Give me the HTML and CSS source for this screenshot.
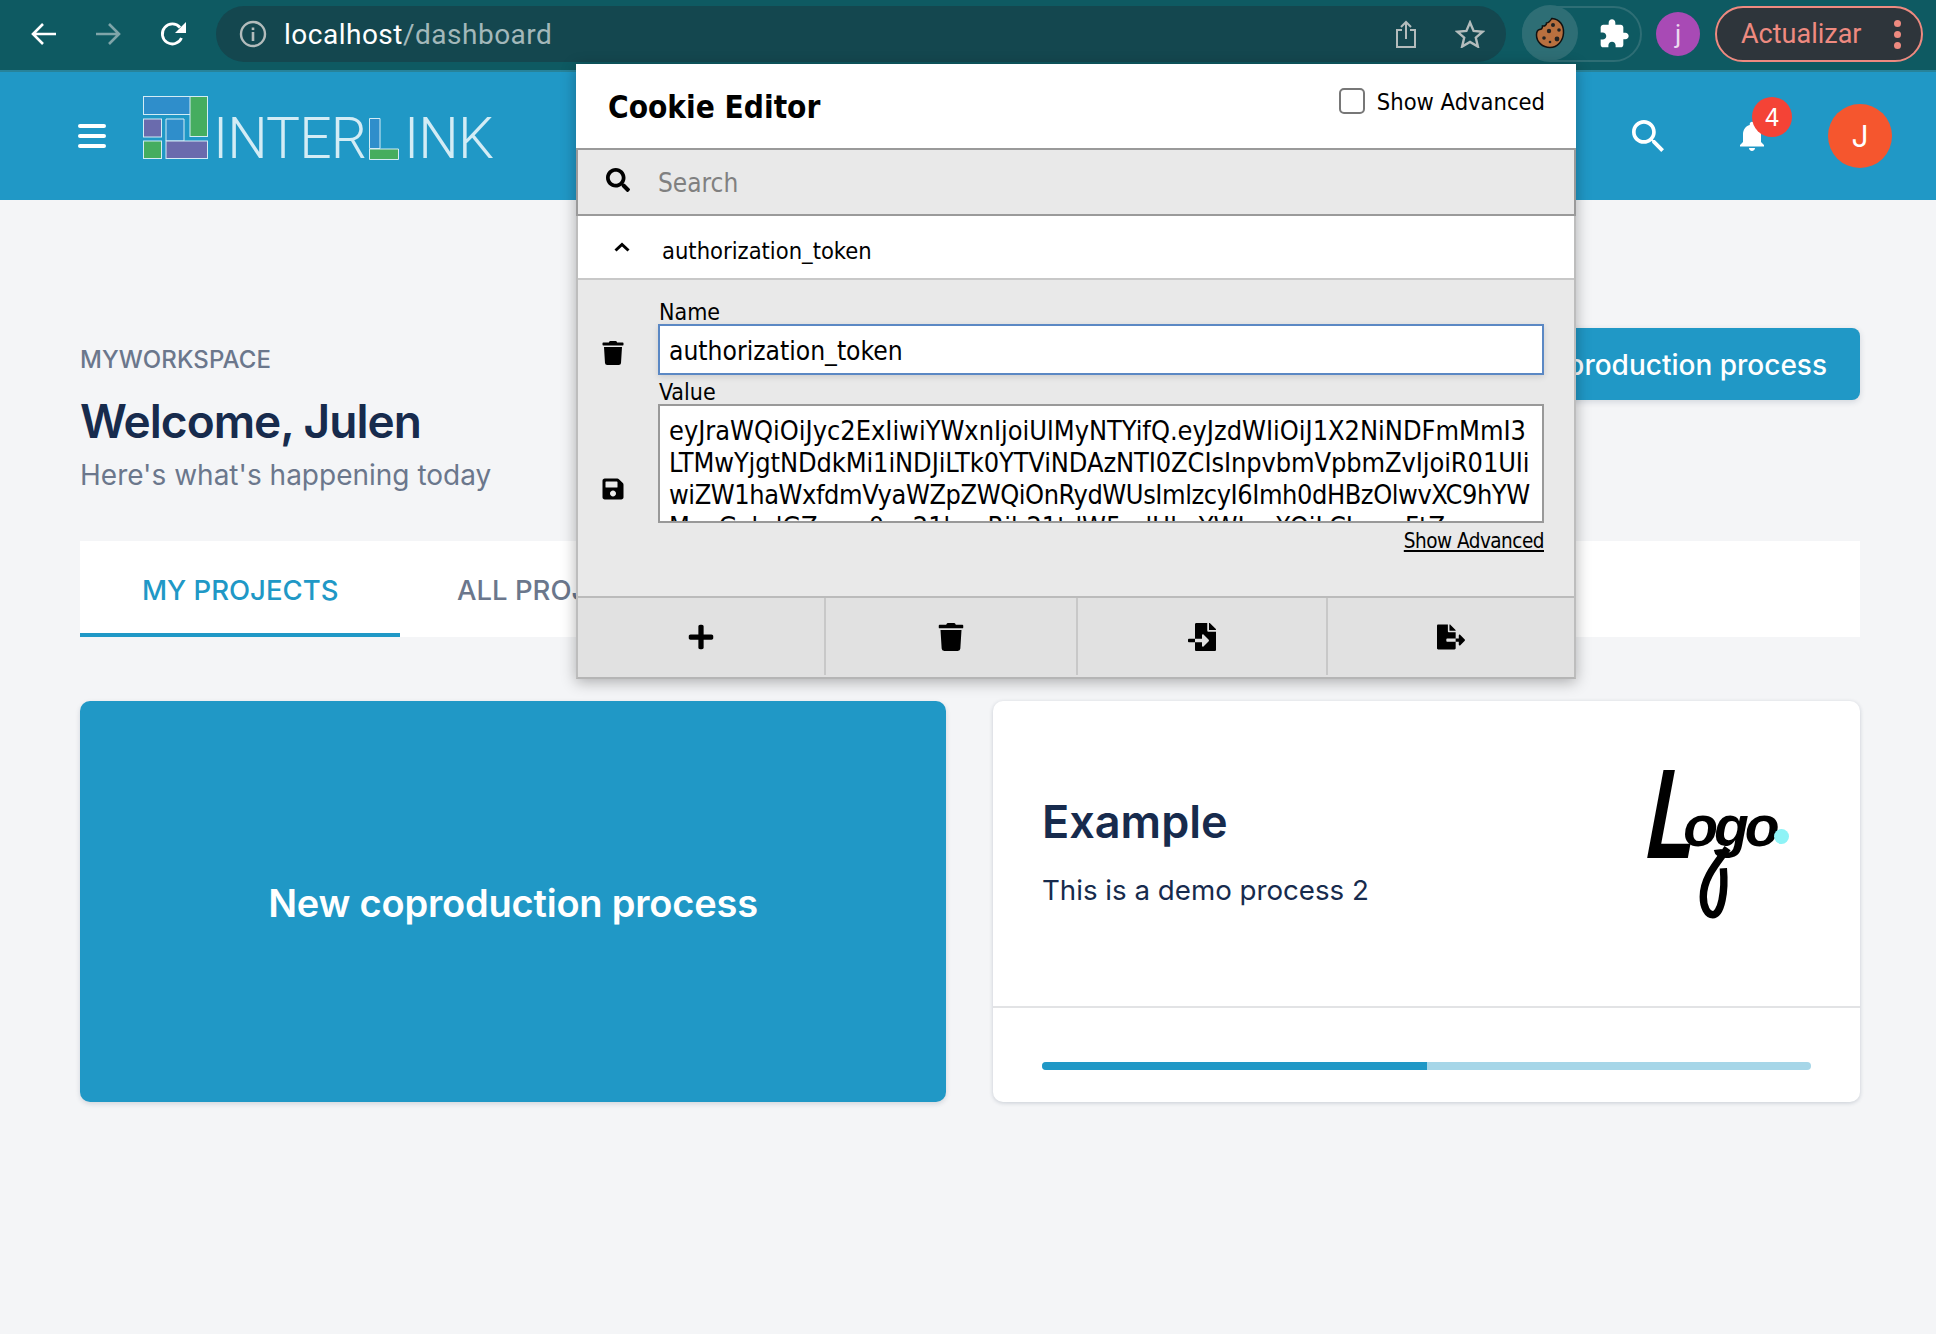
FILE: index.html
```html
<!DOCTYPE html>
<html lang="en">
<head>
    <meta charset="UTF-8">
    <title>Dashboard</title>
    <link rel="stylesheet" href="styles.css">
</head>
<body>
    <!-- Browser chrome -->
    <div class="browser-bar">
        <svg class="nav-icon" viewBox="0 0 26 24"><path d="M25 12H3M12 2L2 12l10 10" fill="none" stroke="#fff" stroke-width="2.6"/></svg>
        <svg class="nav-icon nav-forward" viewBox="0 0 26 24"><path d="M1 12h22M14 2l10 10-10 10" fill="none" stroke="#7fa5a9" stroke-width="2.6"/></svg>
        <svg class="nav-reload" viewBox="0 0 28 26"><path d="M22.5 17a10 10 0 1 1-1.5-10.5" fill="none" stroke="#fff" stroke-width="2.8"/><path d="M27 1v11H16z" fill="#fff"/></svg>
        <div class="url-pill">
            <svg class="info-icon" viewBox="0 0 28 28"><circle cx="14" cy="14" r="12" fill="none" stroke="#b3bcbc" stroke-width="2.4"/><rect x="12.7" y="12" width="2.6" height="9" fill="#b3bcbc"/><rect x="12.7" y="7.5" width="2.6" height="2.6" fill="#b3bcbc"/></svg>
            <span class="url-text">localhost<span class="url-path">/dashboard</span></span>
            <svg class="share-icon" viewBox="0 0 22 28"><path d="M7 10H2v17h18V10h-5M11 19V2M6 7l5-5 5 5" fill="none" stroke="#b3bcbc" stroke-width="2"/></svg>
            <svg class="star-icon" viewBox="0 0 30 28"><path d="M15 2.5l3.6 8.4 9.1.8-6.9 6 2.1 8.9-7.900-4.700-7.900 4.700 2.100-8.900-6.900-6 9.100-.8z" fill="none" stroke="#b3bcbc" stroke-width="2.400"/></svg>
        </div>
        <div class="ext-pill">
            <div class="ext-cookie">
                <svg viewBox="0 0 30 32" width="30" height="32"><path d="M17 1.500c8 .5 12 7.500 11.500 14.500-.5 8-6 14.500-13.500 14.500S1.500 25 1.500 18c0-3 1-5 3-5.500 2.500 0 3-2 3-3.500 2.500.5 4-1 4-3 2-.2 4-2.200 5.500-5z" fill="#b9703f" stroke="#111" stroke-width="1.500"/><circle cx="18" cy="8" r="2" fill="#222"/><circle cx="24" cy="13" r="1.800" fill="#222"/><circle cx="14" cy="14" r="2.200" fill="#222"/><circle cx="22" cy="22" r="2.400" fill="#222"/><circle cx="9" cy="21" r="1.800" fill="#222"/><circle cx="15" cy="25" r="1.300" fill="#222"/></svg>
            </div>
            <svg class="puzzle-icon" viewBox="0 0 24 24"><path fill="#fff" d="M20.500 11H19V7c0-1.100-.9-2-2-2h-4V3.500C13 2.120 11.880 1 10.500 1S8 2.120 8 3.500V5H4c-1.100 0-1.990.9-1.990 2v3.800H3.500c1.490 0 2.700 1.210 2.700 2.700s-1.210 2.700-2.700 2.700H2V20c0 1.100.9 2 2 2h3.800v-1.500c0-1.490 1.210-2.700 2.700-2.700 1.490 0 2.700 1.210 2.700 2.700V22H17c1.100 0 2-.9 2-2v-4h1.500c1.380 0 2.500-1.120 2.500-2.500S21.880 11 20.500 11z"/></svg>
        </div>
        <div class="profile-dot">j</div>
        <div class="update-pill">
            <span>Actualizar</span>
            <div class="kebab"><i></i><i></i><i></i></div>
        </div>
    </div>

    <!-- App bar -->
    <header class="app-bar">
        <div class="hamburger"><i></i><i></i><i></i></div>
        <svg class="logo-mark" viewBox="0 0 65 63">
            <g stroke="#d3ecf5" stroke-width="1">
                <rect x="0.500" y="0.500" width="47" height="18" fill="#2f8ecb"/>
                <rect x="47" y="0.500" width="17.500" height="40" fill="#45ad5f"/>
                <rect x="0.500" y="23" width="18" height="18" fill="#6a6bad"/>
                <path d="M23 23h18v22H23z" fill="#2f8ecb"/>
                <rect x="0.500" y="45" width="18" height="17.500" fill="#45ad5f"/>
                <rect x="23" y="45" width="41.500" height="17.500" fill="#6a6bad"/>
            </g>
        </svg>
        <div class="logo-word">INTER<svg class="logo-l" viewBox="0 0 30 42"><path d="M.5.5h10.500v30H.5z" fill="#2f8ecb" stroke="#d3ecf5"/><path d="M.5 31h29v10.500H.5z" fill="#45ad5f" stroke="#d3ecf5"/></svg>INK</div>
        <div class="app-actions">
            <svg class="app-search" viewBox="3 3 17.500 17.500"><path fill="#fff" d="M15.500 14h-.79l-.28-.27C15.410 12.590 16 11.110 16 9.500 16 5.910 13.090 3 9.500 3S3 5.910 3 9.500 5.910 16 9.500 16c1.610 0 3.090-.59 4.230-1.570l.27.28v.79l5 4.990L20.490 19l-4.990-5zm-6 0C7.010 14 5 11.990 5 9.500S7.010 5 9.500 5 14 7.010 14 9.500 11.990 14 9.500 14z"/></svg>
            <div class="bell">
                <svg viewBox="0 0 24 24" width="36" height="36"><path fill="#fff" d="M12 22c1.100 0 2-.9 2-2h-4c0 1.100.89 2 2 2zm6-6v-5c0-3.070-1.640-5.640-4.500-6.320V4c0-.83-.67-1.500-1.500-1.500s-1.500.67-1.500 1.500v.68C7.630 5.360 6 7.920 6 11v5l-2 2v1h16v-1l-2-2z"/></svg>
                <span class="badge">4</span>
            </div>
            <div class="avatar">J</div>
        </div>
    </header>

    <main class="content">
        <div class="page-head">
            <div class="page-title">
                <div class="overline">MYWORKSPACE</div>
                <h1>Welcome, Julen</h1>
                <div class="subtitle">Here's what's happening today</div>
            </div>
            <button class="new-btn">New coproduction process</button>
        </div>

        <div class="tabs">
            <div class="tab tab-active">MY PROJECTS</div>
            <div class="tab">ALL PROJECTS</div>
        </div>

        <div class="cards">
            <div class="card-new">New coproduction process</div>
            <div class="card">
                <div class="card-top">
                    <div>
                        <h2>Example</h2>
                        <p>This is a demo process 2</p>
                    </div>
                    <div class="card-logo">
                        <span class="logo-big">L</span><span class="logo-rest">ogo</span>
                        <i class="logo-dot"></i>
                        <svg class="logo-tail" viewBox="0 0 40 72"><path d="M30 4C20 18 7 32 7 50c0 10 4 17 9 17 8 0 12-22 10-44" fill="none" stroke="#000" stroke-width="7"/></svg>
                    </div>
                </div>
                <div class="card-bottom">
                    <div class="progress"><div class="progress-fill"></div></div>
                </div>
            </div>
        </div>
    </main>

    <!-- Extension popup -->
    <div class="popup">
        <div class="popup-head">
            <div class="popup-title">Cookie Editor</div>
            <label class="popup-check"><span class="checkbox"></span>Show Advanced</label>
        </div>
        <div class="search-row">
            <svg class="ico search-ico" viewBox="0 0 512 512"><path d="M505 442.700L405.300 343c-4.500-4.500-10.600-7-17-7H372c27.600-35.300 44-79.700 44-128C416 93.100 322.900 0 208 0S0 93.100 0 208s93.100 208 208 208c48.300 0 92.700-16.400 128-44v16.300c0 6.400 2.500 12.500 7 17l99.700 99.700c9.400 9.400 24.600 9.400 33.900 0l28.300-28.300c9.400-9.400 9.400-24.600.1-34zM208 336c-70.700 0-128-57.200-128-128 0-70.700 57.200-128 128-128 70.700 0 128 57.200 128 128 0 70.700-57.200 128-128 128z"/></svg>
            <span>Search</span>
        </div>
        <div class="cookie-row">
            <svg class="chevron" viewBox="0 0 16 10"><path d="M1.500 8.500L8 2.500l6.500 6" fill="none" stroke="#000" stroke-width="3"/></svg>
            <span>authorization_token</span>
        </div>
        <div class="cookie-body">
            <div class="side-icons">
                <svg class="ico side-trash" viewBox="0 0 448 512"><path d="M432 32H312l-9.400-18.700A24 24 0 0 0 281.100 0H166.800a23.720 23.720 0 0 0-21.400 13.300L136 32H16A16 16 0 0 0 0 48v32a16 16 0 0 0 16 16h416a16 16 0 0 0 16-16V48a16 16 0 0 0-16-16zM53.200 467a48 48 0 0 0 47.900 45h245.800a48 48 0 0 0 47.900-45L416 128H32z"/></svg>
                <svg class="ico" viewBox="0 0 448 512"><path d="M433.941 129.941l-83.882-83.882A48 48 0 0 0 316.118 32H48C21.490 32 0 53.490 0 80v352c0 26.510 21.490 48 48 48h352c26.510 0 48-21.490 48-48V163.882a48 48 0 0 0-14.059-33.941zM224 416c-35.346 0-64-28.654-64-64 0-35.346 28.654-64 64-64s64 28.654 64 64c0 35.346-28.654 64-64 64zm96-304.520V212c0 6.627-5.373 12-12 12H76c-6.627 0-12-5.373-12-12V108c0-6.627 5.373-12 12-12h228.520c3.183 0 6.235 1.264 8.485 3.515l3.480 3.480A11.996 11.996 0 0 1 320 111.480z"/></svg>
            </div>
            <div class="fields">
                <div class="field-label">Name</div>
                <div class="name-input">authorization_token</div>
                <div class="field-label value-label">Value</div>
                <div class="value-box">
                    <div>eyJraWQiOiJyc2ExIiwiYWxnIjoiUlMyNTYifQ.eyJzdWIiOiJ1X2NiNDFmMmI3</div>
                    <div class="value-line-tight">LTMwYjgtNDdkMi1iNDJiLTk0YTViNDAzNTI0ZCIsInpvbmVpbmZvIjoiR01UIi</div>
                    <div class="value-line-tighter">wiZW1haWxfdmVyaWZpZWQiOnRydWUsImlzcyI6Imh0dHBzOlwvXC9hYW</div>
                    <div>MucGxhdGZvcm0uc21hcnRjb21tdW5pdHkuYWIuaXOiLCJucmFtZ</div>
                </div>
                <a class="advanced-link">Show Advanced</a>
            </div>
        </div>
        <div class="popup-foot">
            <div class="foot-btn"><svg class="ico" viewBox="0 0 448 512"><path d="M416 208H272V64c0-17.670-14.330-32-32-32h-32c-17.670 0-32 14.330-32 32v144H32c-17.670 0-32 14.330-32 32v32c0 17.670 14.330 32 32 32h144v144c0 17.670 14.330 32 32 32h32c17.670 0 32-14.330 32-32V304h144c17.670 0 32-14.330 32-32v-32c0-17.670-14.330-32-32-32z"/></svg></div>
            <div class="foot-btn"><svg class="ico" viewBox="0 0 448 512"><path d="M432 32H312l-9.400-18.700A24 24 0 0 0 281.100 0H166.800a23.720 23.720 0 0 0-21.400 13.300L136 32H16A16 16 0 0 0 0 48v32a16 16 0 0 0 16 16h416a16 16 0 0 0 16-16V48a16 16 0 0 0-16-16zM53.200 467a48 48 0 0 0 47.900 45h245.800a48 48 0 0 0 47.900-45L416 128H32z"/></svg></div>
            <div class="foot-btn"><svg class="ico" viewBox="0 0 512 512"><path d="M16 288c-8.800 0-16 7.200-16 16v32c0 8.800 7.200 16 16 16h112v-64zm489-183L407.100 7c-4.500-4.500-10.600-7-17-7H384v128h128v-6.100c0-6.300-2.500-12.400-7-16.900zm-153 31V0H152c-13.300 0-24 10.700-24 24v264h128v-65.200c0-14.300 17.300-21.400 27.400-11.300L379 308c6.600 6.700 6.600 17.400 0 24l-95.700 96.400c-10.100 10.100-27.400 3-27.400-11.300V352H128v136c0 13.300 10.700 24 24 24h336c13.300 0 24-10.700 24-24V160H376c-13.200 0-24-10.800-24-24z"/></svg></div>
            <div class="foot-btn foot-last"><svg class="ico" viewBox="0 0 576 512"><path d="M384 121.900c0-6.300-2.500-12.400-7-16.900L279.100 7c-4.500-4.500-10.600-7-17-7H256v128h128zM571 308l-95.700-96.400c-10.100-10.100-27.400-3-27.400 11.300V288h-64v64h64v65.200c0 14.300 17.300 21.400 27.400 11.300L571 332c6.600-6.600 6.600-17.400 0-24zm-379 28v-32c0-8.800 7.200-16 16-16h176V160H248c-13.200 0-24-10.800-24-24V0H24C10.700 0 0 10.700 0 24v464c0 13.300 10.700 24 24 24h336c13.300 0 24-10.700 24-24V352H208c-8.800 0-16-7.200-16-16z"/></svg></div>
        </div>
    </div>
</body>
</html>
```

FILE: styles.css
```css
* {
    box-sizing: border-box;
}

body {
    margin: 0;
    position: relative;
    min-height: 1334px;
    background-color: #f4f5f7;
    font-family: Inter, "Liberation Sans", sans-serif;
    color: #172b4d;
    overflow: hidden;
}

/* browser bar */
.browser-bar {
    height: 72px;
    padding: 6px 13px 8px 31px;
    display: flex;
    align-items: center;
    background-color: #0e5a62;
    border-bottom: 2px solid #27839a;
    font-family: Roboto, sans-serif;
}

.nav-icon {
    width: 26px;
    height: 24px;
    flex: none;
    margin-right: 38px;
}

.nav-reload {
    width: 28px;
    height: 26px;
    flex: none;
    margin-right: 29px;
}

.url-pill {
    width: 1290px;
    height: 56px;
    flex: none;
    display: flex;
    align-items: center;
    padding: 0 21px 0 23px;
    border-radius: 28px;
    background-color: #14474f;
}

.info-icon {
    width: 28px;
    height: 28px;
    margin-right: 17px;
}

.url-text {
    font-size: 28px;
    color: #fff;
    letter-spacing: 0.5px;
    flex: 1;
}

.url-path {
    color: #a3b8ba;
}

.share-icon {
    width: 22px;
    height: 28px;
    margin-right: 38px;
}

.star-icon {
    width: 30px;
    height: 28px;
}

.ext-pill {
    width: 120px;
    height: 56px;
    flex: none;
    margin-left: 16px;
    display: flex;
    align-items: center;
    border: 2px solid #2e6e75;
    border-radius: 28px;
}

.ext-cookie {
    width: 56px;
    height: 56px;
    flex: none;
    margin: -2px 0 0 -2px;
    display: flex;
    align-items: center;
    justify-content: center;
    border-radius: 50%;
    background-color: #2e6e75;
}

.puzzle-icon {
    width: 32px;
    height: 32px;
    margin-left: 20px;
}

.profile-dot {
    width: 44px;
    height: 44px;
    flex: none;
    margin-left: 14px;
    display: flex;
    align-items: center;
    justify-content: center;
    border-radius: 50%;
    background-color: #a84ab5;
    color: #ecd9f0;
    font-size: 26px;
}

.update-pill {
    width: 208px;
    height: 56px;
    flex: none;
    margin-left: 15px;
    display: flex;
    align-items: center;
    justify-content: space-between;
    padding: 0 20px 0 24px;
    border: 2px solid #ee8a80;
    border-radius: 28px;
    background-color: #2e353b;
    color: #ee8a80;
    font-size: 27px;
}

.kebab {
    display: flex;
    flex-direction: column;
    gap: 4px;
}

.kebab i {
    width: 7px;
    height: 7px;
    border-radius: 50%;
    background-color: #ee8a80;
}

/* app bar */
.app-bar {
    height: 128px;
    padding-left: 78px;
    display: flex;
    align-items: center;
    background-color: #2098c6;
}

.hamburger {
    width: 28px;
    display: flex;
    flex-direction: column;
    gap: 6px;
    margin-right: 37px;
}

.hamburger i {
    height: 4px;
    border-radius: 2px;
    background-color: #fff;
}

.logo-mark {
    width: 65px;
    height: 63px;
    flex: none;
    margin-top: -17px;
    margin-right: 5px;
}

.logo-word {
    display: flex;
    align-items: flex-end;
    height: 42px;
    margin-top: 5px;
    font-family: Roboto, sans-serif;
    font-weight: 300;
    font-size: 57px;
    line-height: 42px;
    letter-spacing: -0.9px;
    color: #d3ecf5;
}

.logo-l {
    width: 30px;
    height: 42px;
    flex: none;
    margin: 0 5px 0 3px;
}

.app-actions {
    margin-left: auto;
    padding-right: 44px;
    display: flex;
    align-items: center;
}

.app-search {
    width: 32px;
    height: 32px;
    margin-right: 70px;
}

.bell {
    position: relative;
    width: 36px;
    height: 36px;
    margin-right: 58px;
}

.badge {
    position: absolute;
    top: -21px;
    left: 18px;
    width: 40px;
    height: 40px;
    display: flex;
    align-items: center;
    justify-content: center;
    border-radius: 50%;
    background-color: #f44336;
    color: #fff;
    font-size: 24px;
}

.avatar {
    width: 64px;
    height: 64px;
    display: flex;
    align-items: center;
    justify-content: center;
    border-radius: 50%;
    background-color: #f5562e;
    color: #fff;
    font-size: 30px;
}

/* main content */
.content {
    padding: 128px 76px 0 80px;
}

.page-head {
    display: flex;
    justify-content: space-between;
    align-items: flex-start;
}

.page-title {
    padding-top: 17px;
}

.overline {
    font-size: 24px;
    font-weight: 500;
    line-height: 30px;
    letter-spacing: 0.1px;
    color: #6b778c;
}

h1 {
    margin: 17px 0 0;
    font-size: 46px;
    font-weight: 600;
    line-height: 58px;
    letter-spacing: -1px;
}

.subtitle {
    margin-top: 6px;
    font-size: 28px;
    line-height: 38px;
    color: #6b778c;
}

.new-btn {
    height: 72px;
    padding: 2px 33px 0;
    border: none;
    border-radius: 8px;
    background-color: #2098c6;
    box-shadow: 0 2px 6px rgba(23, 43, 77, 0.15);
    color: #fff;
    font-family: inherit;
    font-size: 28px;
    font-weight: 500;
}

.tabs {
    height: 96px;
    margin-top: 47px;
    display: flex;
    background-color: #fff;
}

.tab {
    width: 320px;
    padding-top: 1px;
    padding-left: 57px;
    display: flex;
    align-items: center;
    font-size: 27.5px;
    font-weight: 500;
    color: #6b778c;
}

.tab-active {
    padding-left: 62px;
    padding-top: 5px;
    color: #2098c6;
    border-bottom: 4px solid #2098c6;
}

.cards {
    margin-top: 64px;
    display: grid;
    grid-template-columns: 866px 867px;
    gap: 47px;
    height: 401px;
}

.card-new {
    padding-top: 3px;
    display: flex;
    align-items: center;
    justify-content: center;
    border-radius: 10px;
    background-color: #2098c6;
    box-shadow: 0 2px 5px rgba(23, 43, 77, 0.15);
    color: #fff;
    font-size: 38px;
    font-weight: 600;
    letter-spacing: -0.2px;
}

.card {
    display: flex;
    flex-direction: column;
    border-radius: 10px;
    background-color: #fff;
    box-shadow: 0 1px 4px rgba(23, 43, 77, 0.2);
}

.card-top {
    height: 307px;
    padding: 93px 70px 0 49px;
    display: flex;
    justify-content: space-between;
    align-items: flex-start;
    border-bottom: 2px solid #e2e3e5;
}

h2 {
    margin: 0;
    font-size: 45px;
    font-weight: 600;
    line-height: 56px;
}

.card p {
    margin: 22px 0 0;
    font-size: 27.7px;
    line-height: 36px;
}

.card-logo {
    position: relative;
    width: 150px;
    height: 150px;
    margin-top: -35px;
    padding-left: 5px;
    color: #000;
    font-family: "Liberation Sans", sans-serif;
    font-weight: 700;
    font-style: italic;
    display: flex;
    align-items: baseline;
    line-height: 110px;
}

.logo-big {
    font-size: 128px;
    letter-spacing: -1px;
    display: inline-block;
    transform-origin: 0 100%;
    transform: scaleX(0.62) skewX(-6deg);
    margin-right: -39px;
}

.logo-rest {
    display: inline-block;
    font-size: 57px;
    letter-spacing: -4px;
    transform: translateY(-12px);
}

.logo-tail {
    position: absolute;
    left: 55px;
    top: 85px;
    width: 44px;
    height: 76px;
}

.logo-dot {
    position: absolute;
    left: 134px;
    top: 70px;
    width: 15px;
    height: 15px;
    border-radius: 50%;
    background-color: #8ef3f6;
}

.card-bottom {
    padding: 54px 49px 0;
}

.progress {
    height: 8px;
    border-radius: 4px;
    background-color: #a6d6e8;
    overflow: hidden;
}

.progress-fill {
    width: 50%;
    height: 100%;
    background-color: #2098c6;
}

/* cookie editor popup */
.popup {
    position: absolute;
    left: 576px;
    top: 64px;
    width: 1000px;
    height: 615px;
    display: flex;
    flex-direction: column;
    background-color: #e9e9e9;
    box-shadow: 0 3px 14px rgba(0, 0, 0, 0.3);
    border-left: 2px solid #bdbdbd;
    border-right: 2px solid #bdbdbd;
    border-bottom: 2px solid #b5b5b5;
    font-family: "DejaVu Sans", sans-serif;
    font-stretch: condensed;
    color: #000;
}

.popup-head {
    height: 84px;
    margin: 0 -2px;
    padding: 23px 31px 0 32px;
    display: flex;
    justify-content: space-between;
    align-items: flex-start;
    background-color: #fff;
}

.popup-title {
    font-size: 31.3px;
    font-weight: 700;
    line-height: 40px;
}

.popup-check {
    display: flex;
    align-items: center;
    font-size: 23.5px;
    line-height: 30px;
}

.checkbox {
    width: 26px;
    height: 26px;
    margin-right: 12px;
    margin-top: -3px;
    border: 2px solid #777;
    border-radius: 5px;
    background-color: #fff;
}

.search-row {
    height: 68px;
    margin: 0 -2px;
    padding: 2px 0 0 28px;
    display: flex;
    align-items: center;
    background-color: #e9e9e9;
    border: 2px solid #9a9a9a;
    color: #808080;
    font-size: 26px;
}

.ico {
    width: 24px;
    height: 24px;
    fill: #000;
}

.search-ico {
    margin-right: 28px;
    margin-top: -6px;
}

.cookie-row {
    height: 64px;
    padding-top: 7px;
    padding-left: 36px;
    display: flex;
    align-items: center;
    background-color: #fff;
    border-bottom: 2px solid #c8c8c8;
    font-size: 23.5px;
}

.chevron {
    width: 16px;
    height: 10px;
    margin-right: 32px;
    margin-top: -8px;
}

.cookie-body {
    flex: 1;
    min-height: 0;
    display: flex;
    padding-right: 30px;
}

.side-icons {
    width: 80px;
    flex: none;
    padding: 61px 0 0 23px;
    display: flex;
    flex-direction: column;
    gap: 112px;
}

.fields {
    flex: 1;
    min-width: 0;
    display: flex;
    flex-direction: column;
}

.field-label {
    height: 44px;
    padding-top: 17px;
    padding-left: 1px;
    font-size: 23px;
    line-height: 30px;
}

.value-label {
    height: 29px;
    padding-top: 2px;
}

.name-input {
    height: 51px;
    padding: 2px 0 0 9px;
    display: flex;
    align-items: center;
    border: 2px solid #5b88c4;
    background-color: #fff;
    font-size: 26.2px;
    box-shadow: 0 2px 6px rgba(0, 0, 0, 0.12);
}

.value-box {
    height: 119px;
    padding: 9px 9px 0;
    border: 2px solid #999;
    background-color: #fff;
    font-size: 26.9px;
    line-height: 32px;
    white-space: nowrap;
    overflow: hidden;
}

.value-line-tight {
    letter-spacing: -0.08px;
}

.value-line-tighter {
    letter-spacing: -0.42px;
}

.advanced-link {
    align-self: flex-end;
    margin-top: 4px;
    font-size: 20.5px;
    line-height: 28px;
    letter-spacing: -0.5px;
    text-decoration: underline;
}

.popup-foot {
    height: 81px;
    padding-bottom: 2px;
    display: grid;
    grid-template-columns: 248px 252px 250px 1fr;
    background-color: #e1e1e1;
    border-top: 2px solid #bbb;
}

.foot-btn {
    display: flex;
    align-items: center;
    justify-content: center;
    border-right: 2px solid #c8c8c8;
}

.foot-btn .ico {
    width: 28px;
    height: 28px;
}

.foot-last {
    border-right: none;
}
```
